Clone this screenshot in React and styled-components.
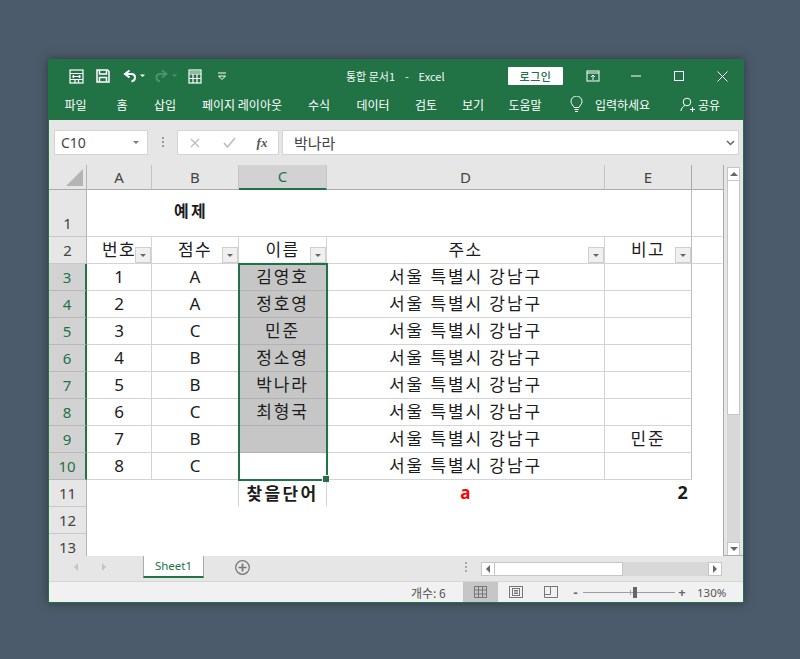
import React from 'react';
import styled, { createGlobalStyle } from 'styled-components';

const GlobalStyle = createGlobalStyle`
  html, body { margin: 0; padding: 0; height: 100%; }
  body {
    background: #4c5b6b;
    font-family: "Noto Sans", "Noto Sans CJK KR", sans-serif;
    overflow: hidden;
  }
`;

const KR = `"Noto Sans CJK KR", "Noto Sans", sans-serif`;

const Page = styled.div`
  padding: 59px 0 0 48px;
`;

const Window = styled.div`
  width: 696px;
  height: 544px;
  box-sizing: border-box;
  border: 1px solid #217346;
  background: #e6e6e6;
  display: flex;
  flex-direction: column;
  box-shadow: 0 0 9px rgba(30, 38, 48, 0.65);
`;

const TitleBar = styled.div`
  height: 32px;
  background: #217346;
  display: flex;
  align-items: center;
  padding-left: 13px;
  color: #fff;
`;

const Slot = styled.div`
  width: ${p => p.$w}px;
  box-sizing: border-box;
  padding-left: ${p => p.$pl || 0}px;
  display: flex;
  align-items: center;
  justify-content: center;
  flex: none;
`;

const Title = styled.div`
  margin-left: 110px;
  width: 162px;
  font: 11px ${KR};
  white-space: pre;
  color: #f3f8f5;
`;

const Login = styled.div`
  width: 55px;
  height: 18px;
  margin-right: 8px;
  background: #fff;
  border-radius: 1px;
  color: #217346;
  font: 500 11px/18px ${KR};
  letter-spacing: 0.6px;
  text-align: center;
`;

const TabBar = styled.div`
  height: 28px;
  background: #217346;
  display: flex;
  align-items: center;
  color: #fff;
  font: 12px ${KR};
  padding-bottom: 3px;
  box-sizing: border-box;
`;

const Tab = styled.div`
  width: ${p => p.$w}px;
  flex: none;
  display: flex;
  justify-content: center;
  white-space: nowrap;
`;

const FormulaBar = styled.div`
  height: 45px;
  box-sizing: border-box;
  display: flex;
  align-items: flex-start;
  padding: 10px 4px 0 5px;
  background: #e6e6e6;
`;

const Box = styled.div`
  height: 25px;
  box-sizing: border-box;
  background: #fff;
  border: 1px solid #d4d4d4;
  display: flex;
  align-items: center;
  flex: ${p => (p.$w ? 'none' : 1)};
  width: ${p => (p.$w ? `${p.$w}px` : 'auto')};
  margin-left: ${p => p.$ml || 0}px;
`;

const NameText = styled.span`
  font: 14px "Noto Sans", sans-serif;
  color: #444;
  margin-left: 6px;
  flex: 1;
`;

const FormulaText = styled.span`
  font: 15px ${KR};
  color: #444;
  margin-left: 11px;
  flex: 1;
`;

const FxText = styled.span`
  font: italic 700 13px "Liberation Serif", serif;
  color: #555;
`;

const Grip = styled.div`
  width: 2px;
  height: 11px;
  margin: 7px 0 0 14px;
  background: repeating-linear-gradient(#9a9a9a 0 2px, transparent 2px 4px);
`;

const Main = styled.div`
  display: flex;
  height: 391px;
`;

const Sheet = styled.div`
  position: relative;
  width: 675px;
  height: 391px;
  flex: none;
  box-sizing: border-box;
  overflow: hidden;
  background: #fff;
  border-right: 1px solid #ababab;
  display: grid;
  grid-template-columns: 38px 65px 87px 88px 278px 87px 31px;
  grid-template-rows: 25px 47px repeat(12, 27px);
  font-family: "Noto Sans", "Noto Sans CJK KR", sans-serif;
`;

const Corner = styled.div`
  background: #e6e6e6;
  border-right: 1px solid #b5b5b5;
  border-bottom: 1px solid #ababab;
  display: flex;
  align-items: flex-end;
  justify-content: flex-end;
  padding: 0 3px 3px 0;
`;

const ColHead = styled.div`
  background: ${p => (p.$on ? '#d2d2d2' : '#e6e6e6')};
  color: ${p => (p.$on ? '#217346' : '#444')};
  border-right: ${p => (p.$bare ? 'none' : `1px solid ${p.$last ? '#ababab' : '#c4c4c4'}`)};
  border-bottom: ${p => (p.$on ? '2px solid #217346' : '1px solid #ababab')};
  font-size: 15px;
  padding-bottom: 1px;
  display: flex;
  align-items: center;
  justify-content: center;
  box-sizing: border-box;
`;

const RowHead = styled.div`
  background: ${p => (p.$on ? '#d2d2d2' : '#e6e6e6')};
  color: ${p => (p.$on ? '#217346' : '#444')};
  border-right: ${p => (p.$on ? '2px solid #217346' : '1px solid #b5b5b5')};
  border-bottom: 1px solid ${p => (p.$on ? '#b8b8b8' : '#c8c8c8')};
  font-size: 15px;
  line-height: 1;
  display: flex;
  align-items: ${p => (p.$tall ? 'flex-end' : 'center')};
  justify-content: center;
  padding-bottom: ${p => (p.$tall ? 5 : 0)}px;
  box-sizing: border-box;
`;

const Cell = styled.div`
  position: relative;
  box-sizing: border-box;
  min-width: 0;
  background: ${p => (p.$fill ? '#c6c6c6' : '#fff')};
  background-clip: ${p => (p.$fill ? 'padding-box' : 'border-box')};
  border-right: 1px solid ${p => (p.$noRight ? 'transparent' : p.$dark ? '#bdbdbd' : '#d4d4d4')};
  border-bottom: 1px solid ${p => (p.$noBottom ? 'transparent' : p.$fill ? '#b2b2b2' : '#d4d4d4')};
  font-size: 17px;
  color: #1c1c1c;
  font-weight: ${p => (p.$bold ? 700 : 400)};
  display: flex;
  align-items: center;
  justify-content: ${p => p.$align || 'center'};
  padding-right: ${p => p.$pr || 0}px;
  padding-left: ${p => p.$pl || 0}px;
  padding-bottom: ${p => p.$pb || 2}px;
  white-space: nowrap;
  grid-column: ${p => p.$span || 'auto'};
`;

const Wide = styled.span`
  letter-spacing: ${p => p.$ls || 1.9}px;
  color: ${p => p.$color || 'inherit'};
  font-size: ${p => p.$size || 17}px;
`;

const FilterBtn = styled.div`
  position: absolute;
  right: 0;
  bottom: 0;
  width: 16px;
  height: 16px;
  box-sizing: border-box;
  background: #f0f0f0;
  border: 1px solid #cfcfcf;
  display: flex;
  align-items: center;
  justify-content: center;
`;

const Arrow = styled.div`
  width: 0;
  height: 0;
  border-left: ${p => p.$s || 4}px solid transparent;
  border-right: ${p => p.$s || 4}px solid transparent;
  border-top: ${p => p.$s || 4}px solid ${p => p.$c || '#666'};
`;

const Selection = styled.div`
  position: absolute;
  left: 189px;
  top: 98px;
  width: 90px;
  height: 218px;
  box-sizing: border-box;
  border: 2px solid #217346;
  pointer-events: none;
`;

const Handle = styled.div`
  position: absolute;
  right: -3px;
  bottom: -3px;
  width: 6px;
  height: 6px;
  background: #217346;
  border: 1px solid #fff;
  border-right: none;
  border-bottom: none;
`;

const VScroll = styled.div`
  width: 19px;
  flex: none;
  background: #e6e6e6;
  box-sizing: border-box;
  padding: 2px 3px 0 3px;
  display: flex;
  flex-direction: column;
`;

const ScrollBtn = styled.div`
  height: 14px;
  flex: none;
  background: #fff;
  border: 1px solid #c6c6c6;
  box-sizing: border-box;
  display: flex;
  align-items: center;
  justify-content: center;
`;

const VThumb = styled.div`
  height: 234px;
  flex: none;
  background: #fff;
  border: 1px solid #c6c6c6;
  border-top: none;
  box-sizing: border-box;
`;

const VTrack = styled.div`
  flex: 1;
  background: #d8d8d8;
`;

const Up = styled(Arrow)`
  border-top: none;
  border-bottom: 4px solid #666;
`;

const SheetBar = styled.div`
  height: 26px;
  box-sizing: border-box;
  background: #e6e6e6;
  display: flex;
  align-items: flex-start;
  border-top: 1px solid #ababab;
  margin-top: -1px;
`;

const NavSlot = styled.div`
  width: ${p => p.$w}px;
  height: 22px;
  flex: none;
  display: flex;
  align-items: center;
  justify-content: center;
`;

const SideLeft = styled.div`
  width: 0;
  height: 0;
  border-top: 4px solid transparent;
  border-bottom: 4px solid transparent;
  border-right: 4px solid ${p => p.$c || '#c4c4c4'};
`;

const SideRight = styled.div`
  width: 0;
  height: 0;
  border-top: 4px solid transparent;
  border-bottom: 4px solid transparent;
  border-left: 4px solid ${p => p.$c || '#c4c4c4'};
`;

const SheetTab = styled.div`
  width: 61px;
  height: 23px;
  margin-top: -1px;
  flex: none;
  box-sizing: border-box;
  background: #fff;
  border-left: 1px solid #ababab;
  border-right: 1px solid #ababab;
  border-bottom: 2px solid #217346;
  color: #217346;
  font-size: 11.5px;
  line-height: 21px;
  text-align: center;
`;

const Dots = styled.div`
  width: 2px;
  height: 10px;
  margin: 6px 14px 0 0;
  background: repeating-linear-gradient(#a8a8a8 0 2px, transparent 2px 4px);
`;

const HScroll = styled.div`
  display: flex;
  height: 14px;
  margin-top: 6px;
  width: 241px;
  flex: none;
`;

const HBtn = styled.div`
  width: 14px;
  flex: none;
  background: #fff;
  border: 1px solid #c6c6c6;
  box-sizing: border-box;
  display: flex;
  align-items: center;
  justify-content: center;
`;

const HThumb = styled.div`
  width: 128px;
  flex: none;
  background: #fff;
  border: 1px solid #c6c6c6;
  border-left: none;
  box-sizing: border-box;
`;

const HTrack = styled.div`
  flex: 1;
  background: #d8d8d8;
`;

const Status = styled.div`
  height: 21px;
  box-sizing: border-box;
  background: #f1f1f1;
  border-top: 1px solid #d6d6d6;
  display: flex;
  align-items: center;
  color: #555;
  font-size: 11px;
`;

const Count = styled.div`
  margin-left: 362px;
  width: 52px;
  flex: none;
  font: 12px ${KR};
  color: #555;
`;

const ViewBtn = styled.div`
  width: ${p => p.$w}px;
  height: 20px;
  flex: none;
  background: ${p => (p.$on ? '#c6c6c6' : 'transparent')};
  display: flex;
  align-items: center;
  justify-content: center;
`;

const ZoomText = styled.div`
  font-size: 11.5px;
  color: #555;
  margin-left: 8px;
`;

const Slider = styled.div`
  position: relative;
  width: 92px;
  height: 1px;
  flex: none;
  background: #9c9c9c;
`;

const SliderKnob = styled.div`
  position: absolute;
  left: 50px;
  top: -5px;
  width: 4px;
  height: 11px;
  background: #666;
`;

const SliderTick = styled.div`
  position: absolute;
  left: 47px;
  top: -2px;
  width: 1px;
  height: 5px;
  background: #aaa;
`;

const Sign = styled.div`
  width: ${p => p.$w}px;
  flex: none;
  text-align: center;
  font: 700 13px/14px "Noto Sans", sans-serif;
  color: #666;
`;

const Ico = ({ w = 16, h = 16, children, color = '#fff', sw = 1.2 }) => (
  <svg width={w} height={h} viewBox={`0 0 ${w} ${h}`} fill="none" stroke={color} strokeWidth={sw}>
    {children}
  </svg>
);

const tabs = [
  ['파일', 53], ['홈', 40], ['삽입', 46], ['페이지 레이아웃', 108], ['수식', 46],
  ['데이터', 62], ['검토', 44], ['보기', 50], ['도움말', 54],
];

const people = ['김영호', '정호영', '민준', '정소영', '박나라', '최형국', '', ''];
const grades = ['A', 'A', 'C', 'B', 'B', 'C', 'B', 'C'];
const heads = ['번호', '점수', '이름', '주소', '비고'];

function App() {
  return (
    <>
      <GlobalStyle />
      <Page>
        <Window>
          <TitleBar>
            <Slot $w={28}>
              <Ico w={15} h={15}>
                <rect x="1" y="1" width="13" height="13" />
                <path d="M1 4.500h13M1 10.500h13M3.500 7.500h8M3.500 7.500l1.500-1.300M3.500 7.500l1.500 1.300M11.500 7.500l-1.500-1.300M11.500 7.500l-1.500 1.300M6 10.500V14M9.500 10.500V14" />
              </Ico>
            </Slot>
            <Slot $w={26}>
              <Ico w={14} h={14} sw={1.5}>
                <path d="M1 1h10.500L13 2.500V13H1z" />
                <path d="M3.500 1v4h7V1M3.500 13V8.500h7V13" />
              </Ico>
            </Slot>
            <Slot $w={34}>
              <Ico w={24} h={14} sw={2}>
                <path d="M8.500 1.500 4 5 8.500 8.500" />
                <path d="M4.500 5h6c2.500 0 3.500 1.500 3.500 3.500S12.500 12 10.500 12.500" />
                <path d="M19 5.500h5l-2.500 2.500z" fill="#fff" stroke="none" />
              </Ico>
            </Slot>
            <Slot $w={32}>
              <Ico w={24} h={14} sw={2} color="#4d9270">
                <path d="M8 1.500 12.500 5 8 8.500" />
                <path d="M12 5H6C3.500 5 2.500 6.500 2.500 8.500S4 12 6 12.500" />
                <path d="M18 5.500h5l-2.500 2.500z" fill="#4d9270" stroke="none" />
              </Ico>
            </Slot>
            <Slot $w={26}>
              <Ico w={14} h={15}>
                <rect x="1" y="1" width="12" height="13" />
                <path d="M1 5h12M1 9.500h12M5 5v9M9 5v9" />
                <path d="M2 3h10" strokeWidth="1" />
              </Ico>
            </Slot>
            <Slot $w={28}>
              <Ico w={10} h={9} sw={1}>
                <path d="M1 1h8M1.500 4 5 7.500 8.500 4z" />
              </Ico>
            </Slot>
            <Title>{'통합 문서1    -    Excel'}</Title>
            <Login>로그인</Login>
            <Slot $w={44}>
              <Ico w={14} h={12} sw={1}>
                <rect x="1" y="1" width="12" height="10" />
                <path d="M1 3h12M7 10V5M5 7l2-2 2 2" />
              </Ico>
            </Slot>
            <Slot $w={42}>
              <Ico w={10} h={10} sw={1}><path d="M0 5h10" /></Ico>
            </Slot>
            <Slot $w={44}>
              <Ico w={10} h={10} sw={1}><rect x=".5" y=".5" width="9" height="9" /></Ico>
            </Slot>
            <Slot $w={42}>
              <Ico w={11} h={11} sw={1}><path d="M.5.5l10 10M10.500.5l-10 10" /></Ico>
            </Slot>
          </TitleBar>

          <TabBar>
            {tabs.map(([label, w]) => (
              <Tab key={label} $w={w}>{label}</Tab>
            ))}
            <Slot $w={43} $pl={5}>
              <Ico w={13} h={17} sw={1}>
                <path d="M4 11.500C3.500 9.500 1 8.500 1 5.500a5.500 5.500 0 0 1 11 0c0 3-2.500 4-3 6z" />
                <path d="M4.500 13.500h4M5 15.500h3" />
              </Ico>
            </Slot>
            <Tab $w={55}>입력하세요</Tab>
            <Slot $w={48} $pl={26}>
              <Ico w={15} h={15} sw={1}>
                <circle cx="7" cy="5" r="3.800" />
                <path d="M.8 14c.7-3 2.500-5 4-5.300M10 12.500h5M12.500 10v5" />
              </Ico>
            </Slot>
            <Tab $w={22}>공유</Tab>
          </TabBar>

          <FormulaBar>
            <Box $w={94}>
              <NameText>C10</NameText>
              <Slot $w={22}><Arrow $s={3} $c="#777" /></Slot>
            </Box>
            <Grip />
            <Box $w={102} $ml={13}>
              <Slot $w={34}>
                <Ico w={10} h={10} color="#bdbdbd" sw={1.4}><path d="M1 1l8 8M9 1l-8 8" /></Ico>
              </Slot>
              <Slot $w={34}>
                <Ico w={13} h={11} color="#bdbdbd" sw={1.6}><path d="M1 6l3.500 4L12 1" /></Ico>
              </Slot>
              <Slot $w={32}><FxText>fx</FxText></Slot>
            </Box>
            <Box $ml={3}>
              <FormulaText>박나라</FormulaText>
              <Slot $w={16}>
                <Ico w={9} h={6} color="#666" sw={1.5}><path d="M1 1l3.500 3.500L8 1" /></Ico>
              </Slot>
            </Box>
          </FormulaBar>

          <Main>
            <Sheet>
              <Corner>
                <Ico w={17} h={17} color="none"><path d="M17 0v17H0z" fill="#b4b4b4" /></Ico>
              </Corner>
              <ColHead>A</ColHead>
              <ColHead>B</ColHead>
              <ColHead $on>C</ColHead>
              <ColHead>D</ColHead>
              <ColHead $last>E</ColHead>
              <ColHead $bare />

              <RowHead $tall>1</RowHead>
              <Cell $span="span 5" $bold $align="flex-start" $pl={87} $pb={6} $dark>
                <Wide $size={16} $ls={2.4}>예제</Wide>
              </Cell>
              <Cell $noRight />

              <RowHead>2</RowHead>
              {heads.map((h, i) => (
                <Cell key={h} $dark={i === 4} $pb={4}>
                  <Wide $ls={1.4}>{h}</Wide>
                  <FilterBtn><Arrow $s={3} $c="#666" /></FilterBtn>
                </Cell>
              ))}
              <Cell $noRight />

              {grades.map((g, i) => (
                <React.Fragment key={i}>
                  <RowHead $on>{i + 3}</RowHead>
                  <Cell>{i + 1}</Cell>
                  <Cell>{g}</Cell>
                  <Cell $fill={i < 7} $pb={3}><Wide>{people[i]}</Wide></Cell>
                  <Cell $pb={3}><Wide>서울 특별시 강남구</Wide></Cell>
                  <Cell $dark $pb={3}>{i === 6 && <Wide>민준</Wide>}</Cell>
                  <Cell $noRight $noBottom />
                </React.Fragment>
              ))}

              <RowHead>11</RowHead>
              <Cell $noRight $noBottom />
              <Cell $noBottom />
              <Cell $bold $noBottom><Wide $ls={2.3}>찾을단어</Wide></Cell>
              <Cell $bold $noRight $noBottom><Wide $color="#ff0000" $ls={0.1}>a</Wide></Cell>
              <Cell $bold $noRight $noBottom $align="flex-end" $pr={3}><Wide $size={18} $ls={0.1}>2</Wide></Cell>
              <Cell $noRight $noBottom />

              <RowHead>12</RowHead>
              <Cell $span="span 6" $noRight $noBottom />
              <RowHead>13</RowHead>
              <Cell $span="span 6" $noRight $noBottom />

              <Selection><Handle /></Selection>
            </Sheet>
            <VScroll>
              <ScrollBtn><Up /></ScrollBtn>
              <VThumb />
              <VTrack />
              <ScrollBtn><Arrow /></ScrollBtn>
            </VScroll>
          </Main>

          <SheetBar>
            <NavSlot $w={53}><SideLeft /></NavSlot>
            <NavSlot $w={4}><SideRight /></NavSlot>
            <NavSlot $w={37} />
            <SheetTab>Sheet1</SheetTab>
            <NavSlot $w={76}>
              <Ico w={15} h={15} color="#777" sw={1.3}>
                <circle cx="7.500" cy="7.500" r="6.800" />
                <path d="M7.500 3.500v8M3.500 7.500h8" strokeWidth="1.700" />
              </Ico>
            </NavSlot>
            <NavSlot $w={185} />
            <Dots />
            <HScroll>
              <HBtn><SideLeft $c="#666" /></HBtn>
              <HThumb />
              <HTrack />
              <HBtn><SideRight $c="#666" /></HBtn>
            </HScroll>
          </SheetBar>

          <Status>
            <Count>개수: 6</Count>
            <ViewBtn $w={35} $on>
              <Ico w={13} h={12} color="#777" sw={1}>
                <rect x=".5" y=".5" width="12" height="11" />
                <path d="M4.500 0v12M8.500 0v12M0 4h13M0 8h13" />
              </Ico>
            </ViewBtn>
            <ViewBtn $w={35}>
              <Ico w={14} h={12} color="#777" sw={1}>
                <rect x=".5" y=".5" width="13" height="11" />
                <rect x="3.500" y="2.500" width="7" height="7" />
                <path d="M5 4.500h4M5 6h4M5 7.500h4" />
              </Ico>
            </ViewBtn>
            <ViewBtn $w={35}>
              <Ico w={14} h={12} color="#777" sw={1}>
                <path d="M.5 0v11.500h13V0M.5 8.500h6V.5h7M6.500.5H.5" />
              </Ico>
            </ViewBtn>
            <Sign $w={15}>-</Sign>
            <Slider>
              <SliderTick />
              <SliderKnob />
            </Slider>
            <Sign $w={14}>+</Sign>
            <ZoomText>130%</ZoomText>
          </Status>
        </Window>
      </Page>
    </>
  );
}

export default App;
